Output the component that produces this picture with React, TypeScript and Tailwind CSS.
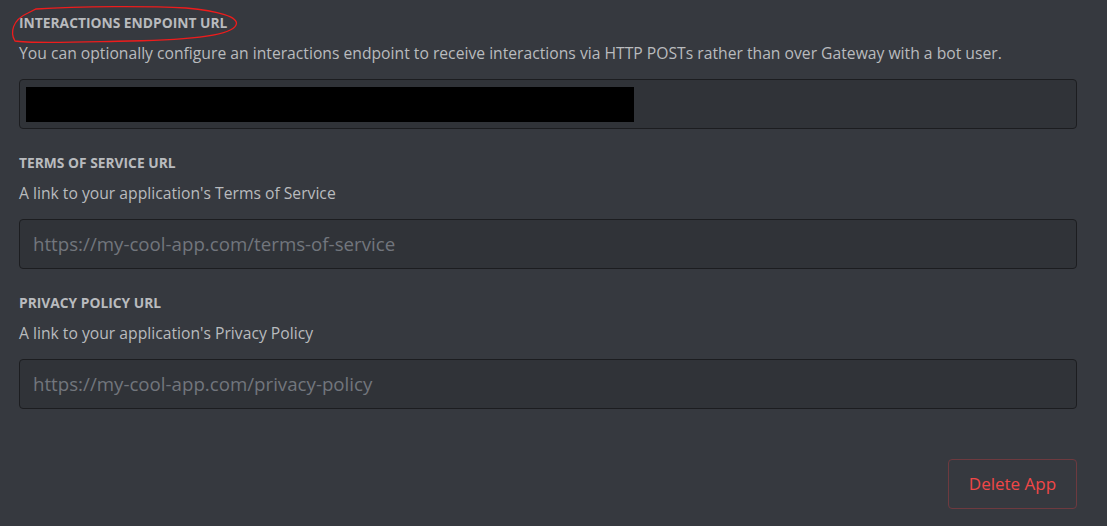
import React from 'react'

const font = { fontFamily: '"Open Sans", "Noto Sans", sans-serif' }

const Field = ({
    title,
    desc,
    placeholder,
    redacted,
}: {
    title: string
    desc: string
    placeholder?: string
    redacted?: boolean
}) => (
    <div className="flex flex-col">
        <h5 className="text-[13.8px] leading-[16px] font-bold uppercase text-[#b9bbbe]">{title}</h5>
        <div className="mt-[12px] text-[15.7px] leading-[20px] text-[#b9bbbe]">{desc}</div>
        <div className="mt-[16px] h-[50px] rounded-[4px] border border-[#1c1d20] bg-[#303338] flex items-center px-[13px]">
            {redacted ? (
                <div className="h-[35px] w-[608px] -ml-[7px] bg-black" />
            ) : (
                <span className="text-[18.7px] text-[#72767d]">{placeholder}</span>
            )}
        </div>
    </div>
)

const App = () => {
    return (
        <div className="min-h-[526px] w-full bg-[#36393f] pl-[19px] pr-[30px] pt-[15px]" style={font}>
            <div className="relative flex flex-col gap-[26px]">
                <Field
                    title="Interactions Endpoint URL"
                    desc="You can optionally configure an interactions endpoint to receive interactions via HTTP POSTs rather than over Gateway with a bot user."
                    redacted
                />
                <Field
                    title="Terms of Service URL"
                    desc="A link to your application's Terms of Service"
                    placeholder="https://my-cool-app.com/terms-of-service"
                />
                <Field
                    title="Privacy Policy URL"
                    desc="A link to your application's Privacy Policy"
                    placeholder="https://my-cool-app.com/privacy-policy"
                />
                <svg
                    className="absolute -left-[19px] -top-[15px] pointer-events-none"
                    width="260"
                    height="50"
                    viewBox="0 0 260 50"
                >
                    <path
                        d="M 15 41 C 10 33, 12 20, 28 13 L 36 9 C 80 6, 150 6, 186 8 C 218 11, 240 17, 236 25 C 232 35, 190 40, 130 41 C 80 42, 30 44, 15 41 Z"
                        fill="none"
                        stroke="#ee1c1c"
                        strokeWidth="1.3"
                    />
                </svg>
            </div>
            <div className="flex justify-end mt-[50px]">
                <button
                    type="button"
                    className="h-[50px] w-[129px] rounded-[4px] border border-[#6e3a3f] text-[17px] text-[#f04747]"
                >
                    Delete App
                </button>
            </div>
        </div>
    )
}

export default App
